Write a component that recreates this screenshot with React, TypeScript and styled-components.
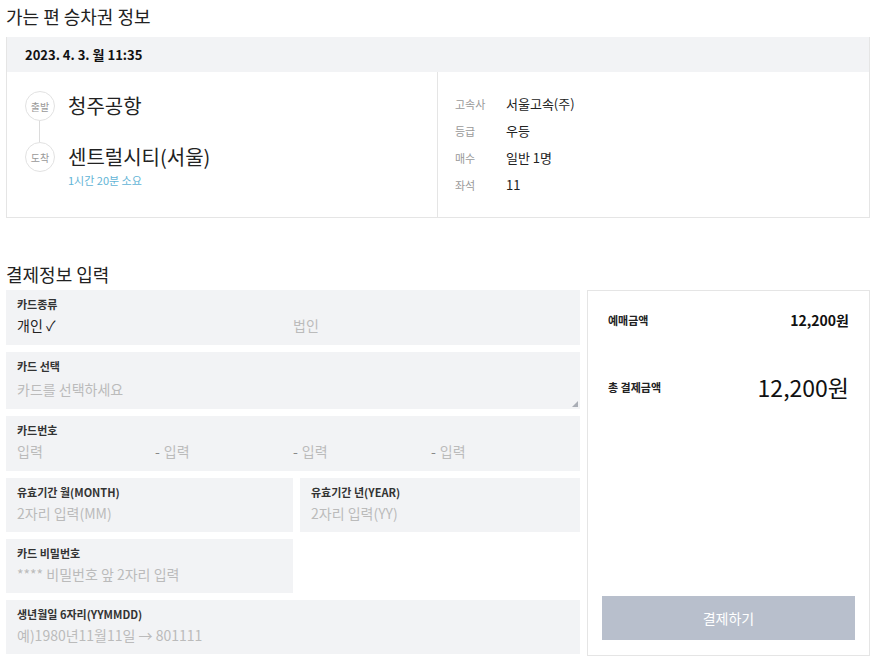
import styled, { createGlobalStyle } from 'styled-components';

const GlobalStyle = createGlobalStyle`
  html, body {
    margin: 0;
    padding: 0;
    background: #fff;
  }
  body {
    font-family: 'Noto Sans CJK KR', 'Noto Sans', sans-serif;
    color: #222;
  }
  * {
    box-sizing: border-box;
  }
`;

const Page = styled.div`
  width: 878px;
  padding: 0 8px 0 6px;
`;

const SectionTitle = styled.h2<{ $top?: number }>`
  margin: ${(p) => p.$top ?? 0}px 0 0;
  padding-top: 3px;
  font-size: 18px;
  font-weight: 400;
  line-height: 26px;
  color: #222;
  height: ${(p) => (p.$top ? 32 : 37)}px;
`;

const TicketCard = styled.section`
  border: 1px solid #e5e5e5;
  border-top: none;
`;

const TicketHeader = styled.div`
  height: 35px;
  background: #f2f3f5;
  padding-left: 18px;
  display: flex;
  align-items: center;
  font-size: 13px;
  font-weight: 700;
  color: #111;
`;

const TicketBody = styled.div`
  display: grid;
  grid-template-columns: 431px 1fr;
  height: 145px;
`;

const RouteColumn = styled.div`
  border-right: 1px solid #e5e5e5;
  padding: 19px 0 0 18px;
  display: flex;
  flex-direction: column;
`;

const Stop = styled.div`
  display: flex;
  align-items: center;
  gap: 13px;
  height: 30px;
`;

const StopBadge = styled.span`
  width: 30px;
  height: 30px;
  border-radius: 50%;
  border: 1px solid #e2e2e2;
  display: flex;
  align-items: center;
  justify-content: center;
  font-size: 10px;
  color: #999;
  flex-shrink: 0;
`;

const StopName = styled.span`
  font-size: 20px;
  line-height: 28px;
  color: #222;
`;

const Connector = styled.div`
  width: 1px;
  height: 21px;
  background: #dcdcdc;
  margin-left: 14px;
`;

const Duration = styled.div`
  margin: 0 0 0 43px;
  font-size: 11px;
  line-height: 16px;
  color: #62b4d6;
`;

const InfoColumn = styled.dl`
  margin: 0;
  padding: 18px 0 0 17px;
  display: flex;
  flex-direction: column;
`;

const InfoRow = styled.div`
  display: flex;
  align-items: center;
  height: 27px;
`;

const InfoLabel = styled.dt`
  width: 51px;
  font-size: 11px;
  color: #999;
`;

const InfoValue = styled.dd`
  margin: 0;
  font-size: 13px;
  color: #222;
`;

const PaymentLayout = styled.div`
  display: grid;
  grid-template-columns: 574px 283px;
  gap: 7px;
  align-items: start;
`;

const Form = styled.div`
  display: flex;
  flex-direction: column;
  gap: 7px;
`;

const FieldRow = styled.div`
  display: grid;
  grid-template-columns: 287px 1fr;
  gap: 7px;
`;

const Field = styled.div<{ $height?: number; $gap?: number }>`
  position: relative;
  background: #f2f3f5;
  height: ${(p) => p.$height ?? 54}px;
  padding: 6px 11px 0;
  display: flex;
  flex-direction: column;
  gap: ${(p) => p.$gap ?? 3}px;
`;

const Grip = styled.span`
  position: absolute;
  right: 2px;
  bottom: 2px;
  width: 0;
  height: 0;
  border-left: 6px solid transparent;
  border-bottom: 6px solid #a9adb5;
`;

const FieldLabel = styled.label`
  font-size: 11px;
  line-height: 16px;
  font-weight: 700;
  color: #333;
`;

const Input = styled.input`
  border: none;
  outline: none;
  background: transparent;
  padding: 0;
  margin: 0;
  width: 100%;
  min-width: 0;
  font-family: inherit;
  font-size: 14px;
  line-height: 20px;
  height: 20px;
  color: #222;
  &::placeholder {
    color: #bbb;
  }
`;

const Choices = styled.div`
  display: grid;
  grid-template-columns: 1fr 1fr;
`;

const Choice = styled.span<{ $active?: boolean }>`
  font-size: 14px;
  line-height: 20px;
  color: ${(p) => (p.$active ? '#222' : '#bbb')};
`;

const CardNumber = styled.div`
  display: grid;
  grid-template-columns: repeat(4, 1fr);
`;

const CardPart = styled.div`
  display: flex;
  align-items: center;
  gap: 4px;
`;

const Dash = styled.span`
  font-size: 14px;
  line-height: 20px;
  color: #888;
`;

const Summary = styled.aside`
  border: 1px solid #e5e5e5;
  height: 366px;
  padding: 18px 14px 15px;
  display: flex;
  flex-direction: column;
`;

const SummaryRow = styled.div<{ $gap?: number }>`
  display: flex;
  justify-content: space-between;
  align-items: center;
  padding: 0 6px 0 6px;
  margin-top: ${(p) => p.$gap ?? 0}px;
`;

const SummaryLabel = styled.span`
  font-size: 11px;
  font-weight: 700;
  color: #222;
`;

const Amount = styled.span<{ $large?: boolean }>`
  font-size: ${(p) => (p.$large ? 23 : 14)}px;
  font-weight: ${(p) => (p.$large ? 400 : 700)};
  line-height: ${(p) => (p.$large ? 32 : 22)}px;
  color: #111;
`;

const PayButton = styled.button`
  margin-top: auto;
  height: 44px;
  border: none;
  background: #b8bfcc;
  color: #fff;
  font-family: inherit;
  font-size: 14px;
  cursor: default;
`;

const ticketInfo = [
  { label: '고속사', value: '서울고속(주)' },
  { label: '등급', value: '우등' },
  { label: '매수', value: '일반 1명' },
  { label: '좌석', value: '11' },
];

export default function App() {
  return (
    <>
      <GlobalStyle />
      <Page>
        <SectionTitle>가는 편 승차권 정보</SectionTitle>
        <TicketCard>
          <TicketHeader>2023. 4. 3. 월 11:35</TicketHeader>
          <TicketBody>
            <RouteColumn>
              <Stop>
                <StopBadge>출발</StopBadge>
                <StopName>청주공항</StopName>
              </Stop>
              <Connector />
              <Stop>
                <StopBadge>도착</StopBadge>
                <StopName>센트럴시티(서울)</StopName>
              </Stop>
              <Duration>1시간 20분 소요</Duration>
            </RouteColumn>
            <InfoColumn>
              {ticketInfo.map((row) => (
                <InfoRow key={row.label}>
                  <InfoLabel>{row.label}</InfoLabel>
                  <InfoValue>{row.value}</InfoValue>
                </InfoRow>
              ))}
            </InfoColumn>
          </TicketBody>
        </TicketCard>

        <SectionTitle $top={40}>결제정보 입력</SectionTitle>
        <PaymentLayout>
          <Form>
            <Field $height={55}>
              <FieldLabel>카드종류</FieldLabel>
              <Choices>
                <Choice $active>개인 ✓</Choice>
                <Choice>법인</Choice>
              </Choices>
            </Field>
            <Field $height={57} $gap={5}>
              <FieldLabel>카드 선택</FieldLabel>
              <Input placeholder="카드를 선택하세요" />
              <Grip />
            </Field>
            <Field $height={55}>
              <FieldLabel>카드번호</FieldLabel>
              <CardNumber>
                {[0, 1, 2, 3].map((i) => (
                  <CardPart key={i}>
                    {i > 0 && <Dash>-</Dash>}
                    <Input placeholder="입력" />
                  </CardPart>
                ))}
              </CardNumber>
            </Field>
            <FieldRow>
              <Field>
                <FieldLabel>유효기간 월(MONTH)</FieldLabel>
                <Input placeholder="2자리 입력(MM)" />
              </Field>
              <Field>
                <FieldLabel>유효기간 년(YEAR)</FieldLabel>
                <Input placeholder="2자리 입력(YY)" />
              </Field>
            </FieldRow>
            <FieldRow>
              <Field>
                <FieldLabel>카드 비밀번호</FieldLabel>
                <Input placeholder="**** 비밀번호 앞 2자리 입력" />
              </Field>
            </FieldRow>
            <Field>
              <FieldLabel>생년월일 6자리(YYMMDD)</FieldLabel>
              <Input placeholder="예)1980년11월11일 → 801111" />
            </Field>
          </Form>
          <Summary>
            <SummaryRow>
              <SummaryLabel>예매금액</SummaryLabel>
              <Amount>12,200원</Amount>
            </SummaryRow>
            <SummaryRow $gap={40}>
              <SummaryLabel>총 결제금액</SummaryLabel>
              <Amount $large>12,200원</Amount>
            </SummaryRow>
            <PayButton>결제하기</PayButton>
          </Summary>
        </PaymentLayout>
      </Page>
    </>
  );
}
